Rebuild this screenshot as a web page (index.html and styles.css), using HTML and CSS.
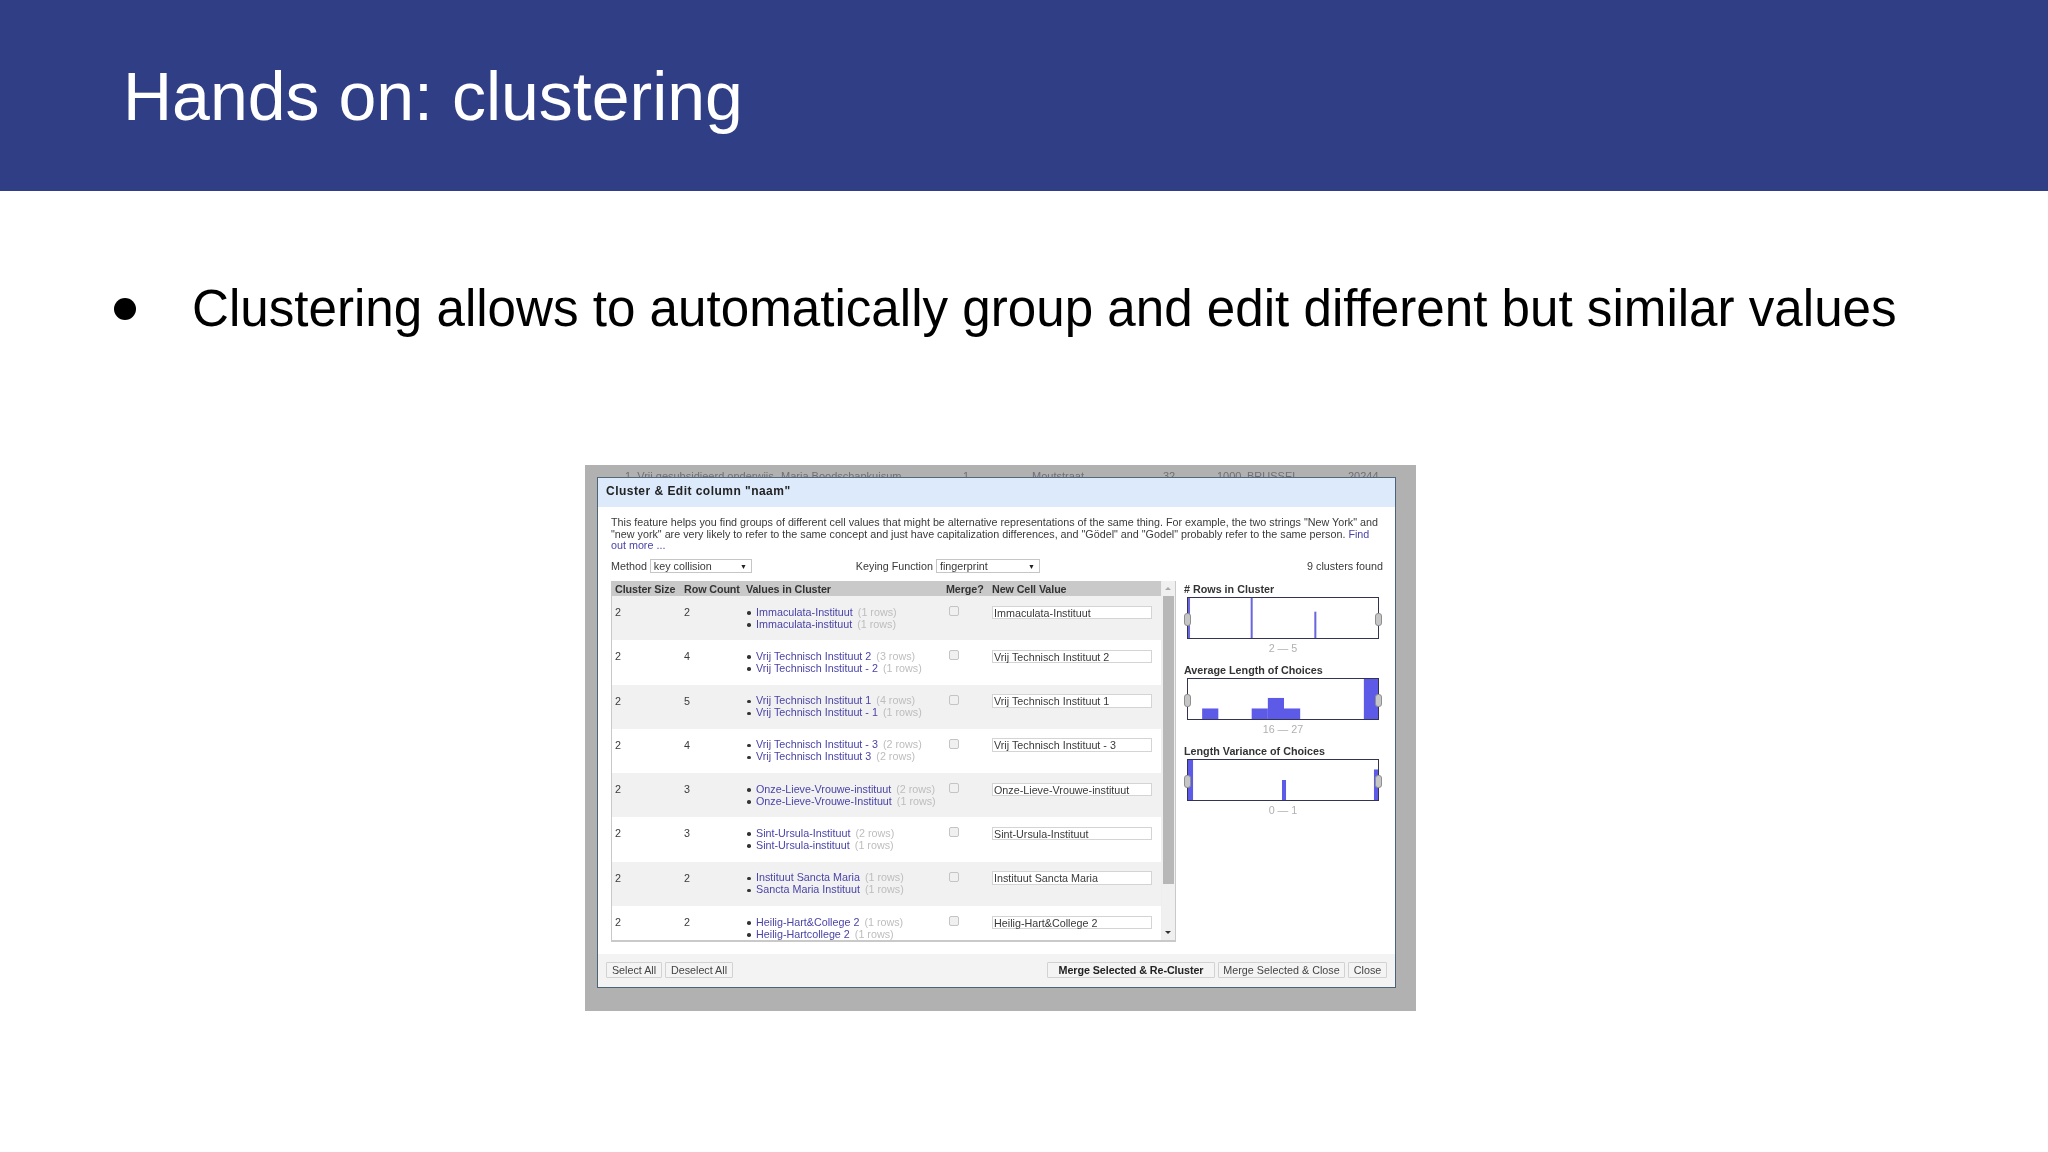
FILE: index.html
```html
<!DOCTYPE html>
<html lang="en">
<head>
<meta charset="utf-8">
<title>Hands on: clustering</title>
<link rel="stylesheet" href="styles.css">
</head>
<body>
<header class="banner"><h1 class="slide-title">Hands on: clustering</h1></header>
<ul class="points"><li class="point"><span class="dot"></span><span>Clustering allows to automatically group and edit different but similar values</span></li></ul>
<div class="shot">
  <div class="backdrop-row">
    <span class="bd a">1. Vrij gesubsidieerd onderwijs</span><span class="bd b">Maria Boodschapkuisum</span><span class="bd h">1</span><span class="bd c">Moutstraat</span><span class="bd d">32</span><span class="bd e">1000</span><span class="bd f">BRUSSEL</span><span class="bd g">20244</span>
  </div>
  <div class="dialog">
    <div class="dlg-title">Cluster &amp; Edit column "naam"</div>
    <div class="dlg-body">
      <p class="intro">This feature helps you find groups of different cell values that might be alternative representations of the same thing. For example, the two strings "New York" and "new york" are very likely to refer to the same concept and just have capitalization differences, and "Gödel" and "Godel" probably refer to the same person. <a class="lnk">Find out more ...</a></p>
      <div class="controls">
        <span class="ctl-label">Method</span><span class="sel sel-m">key collision<i class="caret">▼</i></span>
        <span class="ctl-label keying">Keying Function</span><span class="sel sel-k">fingerprint<i class="caret">▼</i></span>
        <span class="found">9 clusters found</span>
      </div>
      <div class="workspace">
        <div class="table">
          <div class="tbl-main">
            <div class="row head"><span class="c1">Cluster Size</span><span class="c2">Row Count</span><span class="c3">Values in Cluster</span><span class="c4">Merge?</span><span class="c5">New Cell Value</span></div>
            <div class="rows">
              <div class="row odd"><span class="c1">2</span><span class="c2">2</span><ul class="c3 vals"><li><a class="lnk">Immaculata-Instituut</a><em>(1 rows)</em></li><li><a class="lnk">Immaculata-instituut</a><em>(1 rows)</em></li></ul><span class="c4"><span class="check"></span></span><span class="c5"><span class="field">Immaculata-Instituut</span></span></div>
              <div class="row"><span class="c1">2</span><span class="c2">4</span><ul class="c3 vals"><li><a class="lnk">Vrij Technisch Instituut 2</a><em>(3 rows)</em></li><li><a class="lnk">Vrij Technisch Instituut - 2</a><em>(1 rows)</em></li></ul><span class="c4"><span class="check"></span></span><span class="c5"><span class="field">Vrij Technisch Instituut 2</span></span></div>
              <div class="row odd"><span class="c1">2</span><span class="c2">5</span><ul class="c3 vals"><li><a class="lnk">Vrij Technisch Instituut 1</a><em>(4 rows)</em></li><li><a class="lnk">Vrij Technisch Instituut - 1</a><em>(1 rows)</em></li></ul><span class="c4"><span class="check"></span></span><span class="c5"><span class="field">Vrij Technisch Instituut 1</span></span></div>
              <div class="row"><span class="c1">2</span><span class="c2">4</span><ul class="c3 vals"><li><a class="lnk">Vrij Technisch Instituut - 3</a><em>(2 rows)</em></li><li><a class="lnk">Vrij Technisch Instituut 3</a><em>(2 rows)</em></li></ul><span class="c4"><span class="check"></span></span><span class="c5"><span class="field">Vrij Technisch Instituut - 3</span></span></div>
              <div class="row odd"><span class="c1">2</span><span class="c2">3</span><ul class="c3 vals"><li><a class="lnk">Onze-Lieve-Vrouwe-instituut</a><em>(2 rows)</em></li><li><a class="lnk">Onze-Lieve-Vrouwe-Instituut</a><em>(1 rows)</em></li></ul><span class="c4"><span class="check"></span></span><span class="c5"><span class="field">Onze-Lieve-Vrouwe-instituut</span></span></div>
              <div class="row"><span class="c1">2</span><span class="c2">3</span><ul class="c3 vals"><li><a class="lnk">Sint-Ursula-Instituut</a><em>(2 rows)</em></li><li><a class="lnk">Sint-Ursula-instituut</a><em>(1 rows)</em></li></ul><span class="c4"><span class="check"></span></span><span class="c5"><span class="field">Sint-Ursula-Instituut</span></span></div>
              <div class="row odd"><span class="c1">2</span><span class="c2">2</span><ul class="c3 vals"><li><a class="lnk">Instituut Sancta Maria</a><em>(1 rows)</em></li><li><a class="lnk">Sancta Maria Instituut</a><em>(1 rows)</em></li></ul><span class="c4"><span class="check"></span></span><span class="c5"><span class="field">Instituut Sancta Maria</span></span></div>
              <div class="row"><span class="c1">2</span><span class="c2">2</span><ul class="c3 vals"><li><a class="lnk">Heilig-Hart&amp;College 2</a><em>(1 rows)</em></li><li><a class="lnk">Heilig-Hartcollege 2</a><em>(1 rows)</em></li></ul><span class="c4"><span class="check"></span></span><span class="c5"><span class="field">Heilig-Hart&amp;College 2</span></span></div>
            </div>
          </div>
          <div class="scroll">
            <i class="arrow up"></i>
            <div class="thumb"></div>
            <i class="arrow down"></i>
          </div>
        </div>
        <aside class="facets">
          <div class="facet">
            <div class="facet-title"># Rows in Cluster</div>
            <div class="hist">
              <svg class="hist-bars" viewBox="0 0 188 38" preserveAspectRatio="none"><g fill="#6a67dc"><rect x="0" y="0" width="2" height="38"/><rect x="62" y="0" width="2" height="38"/><rect x="125" y="13" width="2" height="25"/></g></svg>
              <span class="grip left"></span><span class="grip right"></span>
            </div>
            <div class="range">2 — 5</div>
          </div>
          <div class="facet">
            <div class="facet-title">Average Length of Choices</div>
            <div class="hist">
              <svg class="hist-bars" viewBox="0 0 188 38" preserveAspectRatio="none"><g fill="#5c5ae6"><rect x="14" y="28" width="16" height="10"/><rect x="63" y="28" width="16" height="10"/><rect x="79" y="18" width="16" height="20"/><rect x="95" y="28" width="16" height="10"/><rect x="174" y="0" width="14" height="38"/></g></svg>
              <span class="grip left"></span><span class="grip right"></span>
            </div>
            <div class="range">16 — 27</div>
          </div>
          <div class="facet">
            <div class="facet-title">Length Variance of Choices</div>
            <div class="hist">
              <svg class="hist-bars" viewBox="0 0 188 38" preserveAspectRatio="none"><g fill="#5c5ae6"><rect x="0" y="0" width="5" height="38"/><rect x="93" y="19" width="4" height="19"/><rect x="184" y="9" width="4" height="29"/></g></svg>
              <span class="grip left"></span><span class="grip right"></span>
            </div>
            <div class="range">0 — 1</div>
          </div>
        </aside>
      </div>
    </div>
    <div class="dlg-foot">
      <div class="btn-group"><span class="btn btn-sel">Select All</span><span class="btn btn-desel">Deselect All</span></div>
      <div class="btn-group"><span class="btn btn-recl">Merge Selected &amp; Re-Cluster</span><span class="btn btn-mc">Merge Selected &amp; Close</span><span class="btn btn-cl">Close</span></div>
    </div>
  </div>
</div>
</body>
</html>
```
FILE: styles.css
```css
* { box-sizing: border-box; }
html, body { margin: 0; padding: 0; }
body { width: 2048px; height: 1152px; background: #fff; overflow: hidden; font-family: "Liberation Sans", Arial, sans-serif; }

.banner { height: 191px; background: #2f3e85; padding: 54px 0 0 123px; }
.slide-title { margin: 0; font-size: 68px; line-height: 84px; font-weight: 400; color: #fff; }

.points { list-style: none; margin: 0; padding: 84px 0 0 114px; }
.point { display: flex; align-items: center; font-size: 51.15px; line-height: 68px; color: #000; }
.dot { width: 22px; height: 22px; border-radius: 50%; background: #000; margin-right: 56px; flex: none; }

.shot { margin: 122px 0 0 585px; width: 831px; height: 546px; background: #b1b1b2; padding: 0 20px 0 12px; filter: blur(0.45px); }

.backdrop-row { height: 12px; display: flex; overflow: hidden; font-size: 11px; line-height: 23px; color: #6f6f74; white-space: nowrap; }
.bd { flex: none; height: 12px; }
.a { width: 184px; padding-left: 28px; }
.b { width: 182px; }
.h { width: 69px; }
.c { width: 131px; }
.d { width: 54px; }
.e { width: 30px; }
.f { width: 101px; }
.g { width: 40px; }

.dialog { width: 799px; height: 511px; background: #fff; border: 1px solid #4b6473; border-top-color: #52697a; display: flex; flex-direction: column; }
.dlg-title { height: 29px; background: #dceafb; padding: 0 8px; font-size: 12px; line-height: 27px; font-weight: 700; letter-spacing: 0.47px; color: #222; }
.dlg-body { flex: 1; padding: 10px 12px 0 13px; min-height: 0; }
.intro { margin: 0; font-size: 10.75px; line-height: 11.6px; color: #3a3a3a; height: 35px; }
.lnk { color: #4b44a8; }
.controls { display: flex; align-items: center; height: 14px; margin-top: 7px; font-size: 10.75px; color: #3a3a3a; }
.ctl-label { flex: none; }
.sel { flex: none; display: flex; justify-content: space-between; align-items: center; height: 14px; margin-left: 3px; padding: 0 4px 0 3px; background: #fff; border: 1px solid #c6c6c6; color: #3a3a3a; }
.sel-m { width: 102px; }
.keying { margin-left: 104px; }
.sel-k { width: 104px; }
.caret { font-style: normal; font-size: 7px; color: #222; }
.found { margin-left: auto; }

.workspace { display: flex; margin-top: 8px; }
.table { width: 565px; height: 361px; flex: none; display: flex; border: 1px solid #c9c9c9; border-top: none; border-bottom-width: 2px; background: #f1f1f2; font-size: 10.75px; color: #3a3a3a; }
.tbl-main { flex: 1; min-width: 0; display: flex; flex-direction: column; overflow: hidden; }
.rows { flex: 1; min-height: 0; overflow: hidden; background: #fff; }
.row { display: flex; height: 44.3px; padding-left: 3px; background: #fff; }
.row.odd { background: #f1f1f2; }
.row.head { height: 15px; background: #c9c9ca; font-weight: 700; color: #333; line-height: 16px; letter-spacing: -0.1px; }
.rows .row { padding-top: 10px; line-height: 12px; }
.c1 { width: 69px; flex: none; }
.c2 { width: 62px; flex: none; }
.c3 { width: 200px; flex: none; }
.c4 { width: 46px; flex: none; }
.c5 { flex: 1; }
.vals { list-style: none; margin: 0; padding: 0 0 0 10px; line-height: 11.5px; }
.vals li { position: relative; white-space: nowrap; padding-top: 0.5px; }
.vals li::before { content: ""; position: absolute; left: -9px; top: 5px; width: 3.5px; height: 3.5px; border-radius: 50%; background: #333; }
.vals em { font-style: normal; color: #bdbdbd; margin-left: 5px; }
.check { display: block; width: 10px; height: 10px; margin: 0 0 0 2.5px; background: #f0f0f0; border: 1px solid #c4c4c4; border-radius: 2px; }
.field { display: block; width: 160px; height: 13.5px; margin-top: -0.5px; padding: 0 1px; line-height: 12px; background: #fff; border: 1px solid #d4d4d4; color: #3a3a3a; }
.scroll { width: 14px; flex: none; position: relative; background: #f0f0f0; padding: 15px 1px 0; border-left: 1px solid #eee; }
.thumb { height: 288px; background: #b7b7b8; }
.arrow { position: absolute; left: 3px; width: 0; height: 0; border-left: 3px solid transparent; border-right: 3px solid transparent; }
.arrow.up { top: 6px; border-bottom: 3px solid #a8a8a8; }
.arrow.down { bottom: 6px; border-top: 3px solid #333; }

.facets { flex: 1; padding: 2px 0 0 8px; }
.facet { height: 81px; }
.facet-title { font-size: 10.75px; line-height: 12px; font-weight: 700; color: #333; }
.hist { position: relative; width: 192px; height: 42px; margin: 2px 0 0 3px; background: #fff; border: 1.5px solid #33344f; }
.hist-bars { display: block; width: 100%; height: 100%; }
.grip { position: absolute; top: 15px; width: 7px; height: 13px; background: #c6c6c6; border: 1.5px solid #8f8f8f; border-radius: 3px; }
.grip.left { left: -4px; }
.grip.right { right: -4px; }
.range { text-align: center; font-size: 10.75px; line-height: 14px; margin-top: 2px; padding-left: 3px; width: 195px; color: #b0b0b0; }

.dlg-foot { height: 33px; flex: none; background: #f3f3f3; display: flex; justify-content: space-between; align-items: center; padding: 0 8px 1px; font-size: 10.75px; color: #444; }
.btn-group { display: flex; gap: 3px; }
.btn { display: block; height: 16px; line-height: 14px; text-align: center; background: #f4f4f4; border: 1px solid #d2d2d2; border-radius: 1px; white-space: nowrap; }
.btn-sel { width: 56px; }
.btn-desel { width: 68px; }
.btn-recl { width: 168px; font-weight: 700; color: #222; letter-spacing: -0.08px; }
.btn-mc { width: 127px; letter-spacing: 0.03px; }
.btn-cl { width: 39px; }
```
